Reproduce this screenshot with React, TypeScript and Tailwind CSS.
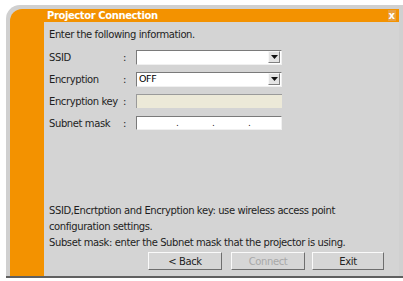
const font = { fontFamily: '"DejaVu Sans", Verdana, sans-serif' };

function Field({ label, children }: { label: string; children: React.ReactNode }) {
  return (
    <div className="flex items-center h-[22px]">
      <span className="w-[74px] whitespace-nowrap">{label}</span>
      <span className="w-[13px]">:</span>
      {children}
    </div>
  );
}

function Combo({ value }: { value?: string }) {
  return (
    <div className="w-[146px] h-[15px] bg-white border-t border-l border-[#7a7a7a] border-r border-b border-r-[#f0f0f0] border-b-[#f0f0f0] flex items-center">
      <span className="flex-1 pl-[2px] text-[9.5px] leading-none text-black">{value}</span>
      <span className="w-[12px] h-[12px] mr-[1px] bg-[#e4e4e4] border border-[#f8f8f8] border-r-[#808080] border-b-[#808080] flex items-center justify-center">
        <svg width="7" height="4" viewBox="0 0 7 4">
          <path d="M0 0h7L3.5 4z" fill="#111" />
        </svg>
      </span>
    </div>
  );
}

function Btn({ label, disabled, className }: { label: string; disabled?: boolean; className: string }) {
  return (
    <div
      className={`h-[18px] bg-[#d6d6d6] border border-[#fafafa] border-r-[#6e6e6e] border-b-[#6e6e6e] flex items-center justify-center ${className} ${
        disabled ? "text-[#a8a8a8]" : "text-[#222]"
      }`}
    >
      {label}
    </div>
  );
}

export default function App() {
  return (
    <div className="w-[403px] h-[281px] bg-white pt-[5px] pl-[6px] pb-[3px]" style={font}>
      <div className="h-full bg-[#d0d0d0] rounded-tl-[14px] pt-[4px] pl-[4px] border-b-2 border-b-[#606060]">
        <div className="h-full bg-[#f39200] rounded-tl-[12px] flex flex-col mr-[4px]">
          <div className="h-[13px] pl-[37px] pr-[3px] pt-[1px] flex items-start justify-between text-white font-bold text-[10px] leading-[11px]">
            <span className="tracking-[-0.4px]">Projector Connection</span>
            <span className="px-[1px] bg-[#e8a040] text-[10px]">x</span>
          </div>
          <div className="flex-1 ml-[34px] bg-[#d4d4d4] px-[5px] pt-[6px] text-[10px] tracking-[-0.4px] text-[#1e1e1e] flex flex-col">
            <div className="h-[14px] leading-[14px]">Enter the following information.</div>
            <div className="mt-[4px] flex flex-col">
              <Field label="SSID">
                <Combo />
              </Field>
              <Field label="Encryption">
                <Combo value="OFF" />
              </Field>
              <Field label="Encryption key">
                <div className="w-[146px] h-[14px] bg-[#ece9d8] border-t border-l border-[#9a9a9a] border-r-[#f4f4f4] border-b-[#f4f4f4]" />
              </Field>
              <Field label="Subnet mask">
                <div className="w-[146px] h-[14px] bg-white border-t border-l border-[#7a7a7a] border-r border-b border-r-[#f0f0f0] border-b-[#f0f0f0] flex items-end text-[9px] leading-none pb-[1px]">
                  <span className="w-[39px]" />
                  <span className="w-[36px]">.</span>
                  <span className="w-[36px]">.</span>
                  <span>.</span>
                </div>
              </Field>
            </div>
            <div className="mt-auto leading-[16px]">
              <p>SSID,Encrtption and Encryption key: use wireless access point</p>
              <p>configuration settings.</p>
              <p>Subset mask: enter the Subnet mask that the projector is using.</p>
            </div>
            <div className="flex pl-[99px] mt-[1px] mb-[6px]">
              <Btn label="< Back" className="w-[74px]" />
              <Btn label="Connect" disabled className="w-[74px] ml-[9px]" />
              <Btn label="Exit" className="w-[72px] ml-[7px]" />
            </div>
          </div>
        </div>
      </div>
    </div>
  );
}
